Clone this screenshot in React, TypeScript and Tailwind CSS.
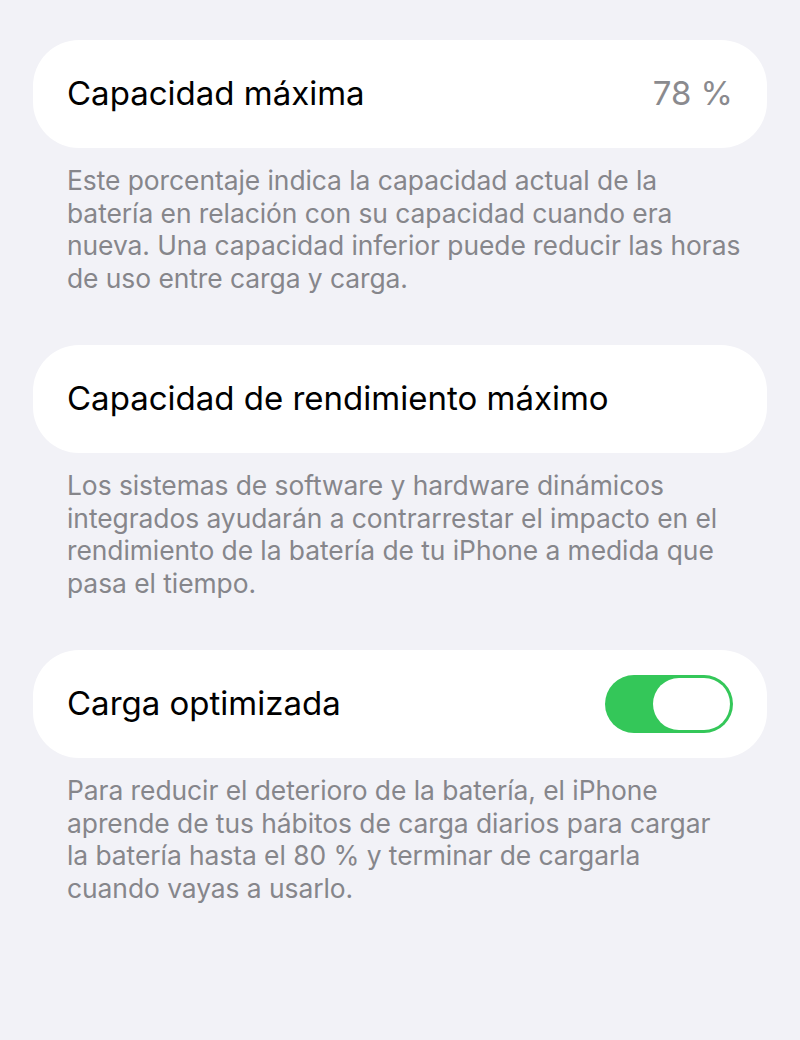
import React from 'react';

const font = { fontFamily: 'Inter, "Noto Sans", sans-serif' };

interface RowProps {
    title: string;
    children?: React.ReactNode;
}

const Row: React.FC<RowProps> = ({ title, children }) => (
    <div className="flex h-[108px] items-center justify-between rounded-[46px] bg-white pl-[34px] pr-[34px]">
        <span className="text-[33px] text-black">{title}</span>
        {children}
    </div>
);

const Footer: React.FC<{ children: React.ReactNode }> = ({ children }) => (
    <p className="mt-[16px] pl-[34px] pr-[20px] text-[26.4px] leading-[32.5px] tracking-[-0.05px] text-[#86868b]">
        {children}
    </p>
);

const Toggle: React.FC = () => (
    <div className="flex h-[58px] w-[128px] items-center justify-end rounded-full bg-[#34c759] p-[3px]">
        <div className="h-full w-[77px] rounded-full bg-white" />
    </div>
);

export default function App() {
    return (
        <div className="min-h-[1040px] bg-[#f2f2f7] px-[33px] pt-[40px]" style={font}>
            <section>
                <Row title="Capacidad máxima">
                    <span className="text-[33px] text-[#8a8a8e]">78 %</span>
                </Row>
                <Footer>
                    Este porcentaje indica la capacidad actual de la
                    <br />
                    batería en relación con su capacidad cuando era
                    <br />
                    nueva. Una capacidad inferior puede reducir las horas
                    <br />
                    de uso entre carga y carga.
                </Footer>
            </section>

            <section className="mt-[51px]">
                <Row title="Capacidad de rendimiento máximo" />
                <Footer>
                    Los sistemas de software y hardware dinámicos
                    <br />
                    integrados ayudarán a contrarrestar el impacto en el
                    <br />
                    rendimiento de la batería de tu iPhone a medida que
                    <br />
                    pasa el tiempo.
                </Footer>
            </section>

            <section className="mt-[51px]">
                <Row title="Carga optimizada">
                    <Toggle />
                </Row>
                <Footer>
                    Para reducir el deterioro de la batería, el iPhone
                    <br />
                    aprende de tus hábitos de carga diarios para cargar
                    <br />
                    la batería hasta el 80 % y terminar de cargarla
                    <br />
                    cuando vayas a usarlo.
                </Footer>
            </section>
        </div>
    );
}
